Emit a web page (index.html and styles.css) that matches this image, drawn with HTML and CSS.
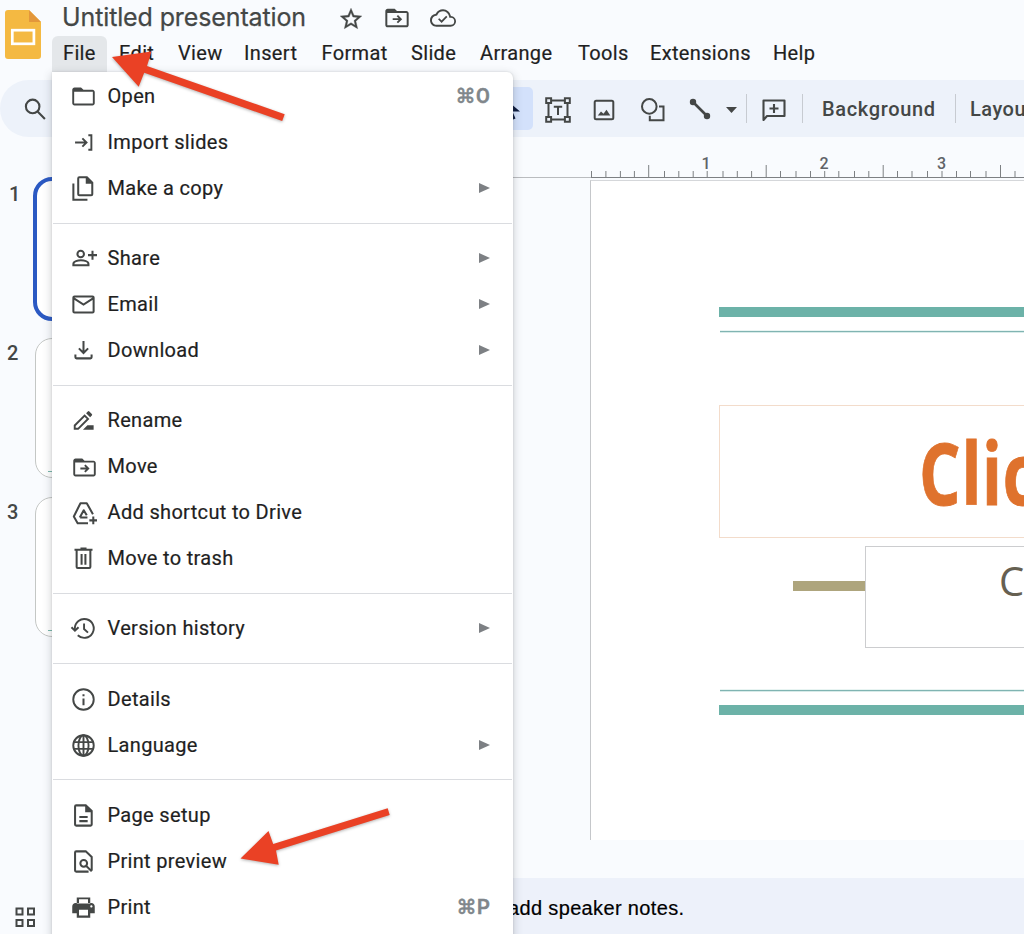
FILE: index.html
```
<!DOCTYPE html>
<html lang="en">
<head>
<meta charset="utf-8">
<title>Untitled presentation</title>
<link rel="stylesheet" href="styles.css">
</head>
<body>
<div class="app">
  <header class="header">
    <svg class="logo" viewBox="0 0 36 50"><path fill="#f4b942" d="M3 0h21l12 12v34a3 3 0 0 1-3 3H3a3 3 0 0 1-3-3V3a3 3 0 0 1 3-3z"/><path fill="#e3973b" d="M24 0l12 12H24z"/><rect x="7.3" y="20.2" width="21.6" height="13.6" fill="none" stroke="#fff" stroke-width="2.7"/></svg>
    <div class="heading">
      <div class="title-row">
        <h1 class="title">Untitled presentation</h1>
        <svg class="star" viewBox="0 0 24 24"><path fill="currentColor" stroke="currentColor" stroke-width=".3" d="M22 9.24l-7.19-.62L12 2 9.19 8.63 2 9.24l5.46 4.73L5.82 21 12 17.27 18.18 21l-1.63-7.03L22 9.24zM12 15.4l-3.76 2.27 1-4.28-3.32-2.88 4.38-.38L12 6.1l1.71 4.04 4.38.38-3.32 2.88 1 4.28L12 15.4z"/></svg>
        <svg class="move-title" viewBox="0 0 24 24"><path fill="currentColor" fill-rule="evenodd" d="M10 4H4c-1.100 0-2 .900-2 2v12c0 1.100.900 2 2 2h16c1.100 0 2-.900 2-2V8c0-1.100-.900-2-2-2h-8zM3.700 7.700h16.600v10.600H3.700z"/><path fill="none" stroke="currentColor" stroke-width="1.600" d="M8.300 13h6.500M12.300 10l3 3-3 3"/></svg>
        <svg class="cloud" viewBox="0 0 24 24"><path fill="currentColor" d="M19.35 10.04A7.49 7.49 0 0 0 12 4C9.11 4 6.6 5.64 5.35 8.04A5.994 5.994 0 0 0 0 14c0 3.31 2.69 6 6 6h13c2.76 0 5-2.24 5-5 0-2.64-2.05-4.78-4.65-4.96zM19 18.2H6c-2.3 0-4.2-1.9-4.2-4.2 0-2.1 1.6-3.95 3.73-4.17l1-.1.47-.9A5.7 5.7 0 0 1 12 5.8c2.7 0 5 1.900 5.57 4.500l.3 1.400 1.400.1A3.200 3.200 0 0 1 19 18.200z"/><path fill="none" stroke="currentColor" stroke-width="1.600" d="M8 12.700l2.700 2.700 4.800-4.900"/></svg>
      </div>
      <nav class="menubar">
        <span class="m active">File</span><span class="m edit">Edit</span><span class="m view">View</span><span class="m insert">Insert</span><span class="m format">Format</span><span class="m slide-m">Slide</span><span class="m arrange">Arrange</span><span class="m tools">Tools</span><span class="m ext">Extensions</span><span class="m help">Help</span>
      </nav>
    </div>
  </header>

  <div class="toolbar">
    <svg class="t-search" viewBox="0 0 24 24"><path fill="none" stroke="currentColor" stroke-width="1.800" d="M14.200 14.200L20.500 20.500M15.800 9.800a5.800 5.800 0 1 1-11.600 0 5.800 5.800 0 0 1 11.600 0z"/></svg>
    <div class="t-select"><svg viewBox="0 0 24 24"><path fill="#0c1a3e" d="M5 0V20l6-4 3 7 3.500-1.500-3-7H22z"/></svg></div>
    <svg class="t-text" viewBox="0 0 26 26"><g fill="none" stroke="currentColor" stroke-width="2"><path d="M6.500 3.500h13M6.500 22.500h13M3.500 6.500v13M22.500 6.500v13"/><path d="M1.200 1.200h4.900v4.900H1.200zM19.900 1.200h4.900v4.900h-4.900zM1.200 19.900h4.900v4.900H1.200zM19.900 19.900h4.900v4.900h-4.900z"/><path d="M8.800 9.700h8.400M13 9.700v8.300"/></g></svg>
    <svg class="t-image" viewBox="0 0 22 22"><rect x="1.700" y="1.700" width="18.600" height="18.600" rx="1.500" fill="none" stroke="currentColor" stroke-width="2"/><path fill="currentColor" d="M4.800 16.500l3.200-4 2.500 2.300 3-4 3.800 5.700z"/></svg>
    <svg class="t-shape" viewBox="0 0 24 24"><g fill="none" stroke="currentColor" stroke-width="2"><circle cx="8.300" cy="8.400" r="7.300"/><path d="M18 8.500h4.500v13.800H8.800v-4.500"/></g></svg>
    <svg class="t-line" viewBox="0 0 22 22"><path stroke="currentColor" stroke-width="2.600" d="M4 4l14 14"/><g fill="currentColor"><circle cx="4" cy="4" r="3.200"/><circle cx="18" cy="18" r="3.200"/></g></svg>
    <svg class="t-caret" viewBox="0 0 11 6"><path fill="currentColor" d="M0 0h11L5.500 6z"/></svg>
    <i class="sep s1"></i>
    <svg class="t-comment" viewBox="0 0 24 24"><path fill="none" stroke="currentColor" stroke-width="2.100" stroke-linejoin="round" d="M1.500 22V2.500h21V18H5z M12 6v9M7.500 10.500h9"/></svg>
    <i class="sep s2"></i>
    <span class="t-bg">Background</span>
    <i class="sep s3"></i>
    <span class="t-layout">Layou</span>
  </div>

  <main class="workspace">
    <aside class="rail">
      <div class="thumb-row first"><b>1</b><div class="thumb selected"></div></div>
      <div class="thumb-row"><b>2</b><div class="thumb"><i></i></div></div>
      <div class="thumb-row"><b>3</b><div class="thumb"><i></i></div></div>
      <svg class="grid-icon" viewBox="0 0 21 21"><path fill="none" stroke="currentColor" stroke-width="2" d="M1.500 1.500h6v6h-6zM13 1.500h6v6h-6zM1.500 13h6v6h-6zM13 13h6v6h-6z"/></svg>
    </aside>
    <section class="editor">
      <svg class="ruler" viewBox="0 0 434 43">
        <path stroke="#babcbf" stroke-width="1" d="M0 40.500H434" fill="none"/>
        <path stroke="#7d8083" stroke-width="1" fill="none" d="M1 40.500H434M1.500 34v6M15.900 34v6M30.400 34v6M44.400 34v6M58.700 28v12M74.500 34v6M88.800 34v6M103.200 34v6M117.200 34v6M133 34v6M147.300 34v6M161.600 34v6M176.200 28v12M190.500 34v6M206 34v6M220.500 34v6M234.700 34v6M248.800 34v6M264.500 34v6M278.800 34v6M293.200 28v12M307.500 34v6M322 34v6M337.500 34v6M352 34v6M366.500 34v6M380.500 34v6M396 34v6M410.500 28v12M425 34v6"/>
        <g class="ruler-num"><text x="116" y="31.500">1</text><text x="234" y="31.500">2</text><text x="351.500" y="31.500">3</text></g>
      </svg>
      <div class="slide">
        <i class="bar top"></i><i class="line upper"></i>
        <div class="title-box"><span>Clic</span></div>
        <i class="tan"></i>
        <div class="sub-box">C</div>
        <i class="line lower"></i><i class="bar bottom"></i>
      </div>
      <div class="notes">add speaker notes.</div>
    </section>
  </main>

  <div class="menu">
    <div class="row"><svg viewBox="0 0 24 24"><path fill="currentColor" fill-rule="evenodd" d="M9.800 4H4c-1.100 0-2 .900-2 2v12c0 1.100.900 2 2 2h16c1.100 0 2-.900 2-2V8c0-1.100-.900-2-2-2h-8zM3.700 7.700h16.600v10.600H3.700z"/></svg><span>Open</span><kbd>⌘O</kbd></div>
    <div class="row"><svg viewBox="0 0 24 24"><path fill="none" stroke="currentColor" stroke-width="1.700" d="M4.500 12h10M11 8.300L14.700 12 11 15.700M16.300 5.500H19v13h-2.700"/></svg><span>Import slides</span></div>
    <div class="row"><svg viewBox="0 0 24 24"><path fill="none" stroke="currentColor" stroke-width="1.800" d="M3 7.500V22h12.500M8.300 2H15l4.800 4.800V17a1 1 0 0 1-1 1H8.300a1 1 0 0 1-1-1V3a1 1 0 0 1 1-1z"/><path fill="currentColor" d="M14 1.500l6.300 6.300H14z"/></svg><span>Make a copy</span><em></em></div>
    <hr>
    <div class="row"><svg viewBox="0 0 24 24"><g fill="none" stroke="currentColor" stroke-width="1.800"><circle cx="9.500" cy="8" r="2.900"/><path d="M3 18v-1.200c0-2.300 4-3.200 6.700-3.200s6.700.900 6.700 3.200V18zM20 5v8M16 9h8"/></g></svg><span>Share</span><em></em></div>
    <div class="row"><svg viewBox="0 0 24 24"><path fill="none" stroke="currentColor" stroke-width="1.800" d="M4 4.800h16a1 1 0 0 1 1 1v12.400a1 1 0 0 1-1 1H4a1 1 0 0 1-1-1V5.800a1 1 0 0 1 1-1zM3.500 6.500L12 12l8.500-5.500"/></svg><span>Email</span><em></em></div>
    <div class="row"><svg viewBox="0 0 24 24"><path fill="none" stroke="currentColor" stroke-width="1.800" d="M12 3.500v10.500M7.900 10.100L12 14.200l4.100-4.100M4.800 15.500V18a1 1 0 0 0 1 1h12.400a1 1 0 0 0 1-1v-2.500"/></svg><span>Download</span><em></em></div>
    <hr>
    <div class="row"><svg viewBox="0 0 24 24"><path fill="none" stroke="currentColor" stroke-width="1.700" d="M4.200 19.400v-3l8.800-8.800 3 3-8.800 8.800z"/><path fill="currentColor" d="M14.300 5.500l1.500-1.500a1 1 0 0 1 1.400 0l2.200 2.200a1 1 0 0 1 0 1.400l-1.500 1.500zM11.500 20.200l4-4H21v4z"/></svg><span>Rename</span></div>
    <div class="row"><svg viewBox="0 0 24 24"><g transform="translate(.9 .8)"><path fill="currentColor" fill-rule="evenodd" d="M10 4H4c-1.100 0-2 .900-2 2v12c0 1.100.900 2 2 2h16c1.100 0 2-.900 2-2V8c0-1.100-.900-2-2-2h-8zM3.700 7.700h16.600v10.600H3.700z"/><path fill="none" stroke="currentColor" stroke-width="1.700" d="M8.300 13h6.500M12.300 10l3 3-3 3"/></g></svg><span>Move</span></div>
    <div class="row"><svg viewBox="0 0 24 24"><g fill="none" stroke="currentColor" stroke-width="1.800" stroke-linejoin="round"><path d="M16 21.500H6.800L3.400 15.500 9.300 3.800h5.600l5.500 9.700M9 16.500h6.500M8.700 16.500l3.500-6.500 2.700 4.500M20.700 15.500v7M17.200 19h7"/></g></svg><span>Add shortcut to Drive</span></div>
    <div class="row"><svg viewBox="0 0 24 24"><path fill="none" stroke="currentColor" stroke-width="1.800" d="M4 4.300h16M9.300 3.200h5.400M5.900 5v14.500a1 1 0 0 0 1 1h10.200a1 1 0 0 0 1-1V5M10.300 8v9.500M13.700 8v9.500"/></svg><span>Move to trash</span></div>
    <hr>
    <div class="row"><svg viewBox="0 0 24 24"><path fill="none" stroke="currentColor" stroke-width="1.700" d="M4.300 13.500V12a8.400 8.400 0 1 1 2.600 6M12.500 7.500v5l3.500 3.200"/><path fill="none" stroke="currentColor" stroke-width="1.800" d="M1.300 10.900l3.100 3 3.200-3"/></svg><span>Version history</span><em></em></div>
    <hr class="low">
    <div class="row"><svg viewBox="0 0 24 24"><circle cx="12" cy="12" r="9.100" fill="none" stroke="currentColor" stroke-width="1.700"/><path fill="currentColor" d="M11.100 11h1.800v6h-1.800zM11.100 7.300h1.800v1.900h-1.800z"/></svg><span>Details</span></div>
    <div class="row"><svg viewBox="0 0 24 24"><g fill="none" stroke="currentColor" stroke-width="1.700"><circle cx="12" cy="12" r="9.100"/><ellipse cx="12" cy="12" rx="4.500" ry="9.100"/><path d="M3.600 9h16.800M3.600 15h16.800M12 3v18"/></g></svg><span>Language</span><em></em></div>
    <hr class="last">
    <div class="row"><svg viewBox="0 0 24 24"><path fill="none" stroke="currentColor" stroke-width="1.800" d="M5.500 3H14l5.300 5v12a1 1 0 0 1-1 1H5.500a1 1 0 0 1-1-1V4a1 1 0 0 1 1-1zM8.300 13.300h7.400M8.300 17h7.400"/><path fill="currentColor" d="M13.500 2.500L19.500 9h-6z"/></svg><span>Page setup</span></div>
    <div class="row"><svg viewBox="0 0 24 24"><g fill="none" stroke="currentColor" stroke-width="1.800"><path d="M16.500 21H5.500a1 1 0 0 1-1-1V4a1 1 0 0 1 1-1H14l5.300 5v12M14.300 15.800l5 5"/><circle cx="12.200" cy="13.600" r="3"/></g></svg><span>Print preview</span></div>
    <div class="row"><svg viewBox="0 0 24 24"><path fill="currentColor" fill-rule="evenodd" d="M19 8H5c-1.660 0-3 1.340-3 3v6h4v4h12v-4h4v-6c0-1.660-1.340-3-3-3zm-3 11H8v-5h8v5zm3-7c-.550 0-1-.450-1-1s.450-1 1-1 1 .450 1 1-.450 1-1 1zM18 3H6v5.500h12zM16 4.700v3.300H8V4.700z"/></svg><span>Print</span><kbd>⌘P</kbd></div>
  </div>

  <svg class="pointers" viewBox="0 0 1024 934"><g fill="#ea4125"><path d="M112 57l39.500-5.500-4.500 14.500 137.700 48.200-2.500 6.800-138-48.300-5.500 14z"/><path d="M240.500 858.500l28-27.500 4.700 13 114.500-35.700 2 6.700L276 850.500l2.700 14.200z"/></g></svg>
</div>
</body>
</html>
```
FILE: styles.css
```
* { box-sizing: border-box; }
body { margin: 0; background: #f9fbfe; font-family: Roboto, "Liberation Sans", sans-serif; color: #1f1f1f; }
svg { display: block; flex: none; }
.app { position: relative; width: 1024px; height: 934px; overflow: hidden; display: flex; flex-direction: column; }

.header { height: 80px; display: flex; flex: none; padding-left: 5px; }
.logo { width: 36px; height: 50px; margin-top: 10px; }
.heading { margin-left: 11px; }
.title-row { display: flex; align-items: center; height: 36px; padding-left: 10px; color: #444746; }
.title { margin: 0; width: 250px; font: 400 25px/34px Inter, sans-serif; letter-spacing: -0.12px; white-space: nowrap; height: 36px; -webkit-text-stroke: .25px #444746; }
.star { width: 26px; height: 26px; margin: 1px 0 0 26px; }
.move-title { width: 28px; height: 28px; margin-left: 19px; }
.cloud { width: 26px; height: 26px; margin-left: 19px; }
.menubar { display: flex; height: 36px; font-size: 20px; line-height: 35px; letter-spacing: .34px; white-space: nowrap; -webkit-text-stroke: .2px #1f1f1f; }
.m { padding-left: 11px; flex: none; }
.active { width: 55px; background: #e4e7ea; border-radius: 6px 6px 0 0; }
.edit { width: 60px; padding-left: 12px; }
.view { width: 66px; }
.insert { width: 77.5px; }
.format { width: 89.5px; }
.slide-m { width: 69px; }
.arrange { width: 98px; }
.tools { width: 72px; }
.ext { width: 123px; }

.toolbar { height: 57px; flex: none; display: flex; align-items: center; background: #edf2fa; border-radius: 29px 0 0 29px; color: #444746; font-size: 20px; font-weight: 500; white-space: nowrap; }
.t-search { width: 28px; height: 28px; margin-left: 21px; }
.t-select { width: 40px; height: 43px; margin-left: 444px; border-radius: 5px; background: #d3e1fb; flex: none; padding: 10px 0 0 5px; }
.t-select svg { width: 24px; height: 24px; }
.t-text { width: 26px; height: 26px; margin: 3px 0 0 12px; }
.t-image { width: 22px; height: 22px; margin: 3px 0 0 22px; }
.t-shape { width: 24px; height: 24px; margin: 3px 0 0 26px; }
.t-line { width: 22px; height: 22px; margin-left: 24px; }
.t-caret { width: 11px; height: 6px; margin: 3px 0 0 15px; }
.sep { width: 1px; height: 29px; background: #c7cbd1; flex: none; }
.s1 { margin-left: 9px; }
.t-comment { width: 24px; height: 24px; margin: 2px 0 0 15px; }
.s2 { margin-left: 16px; }
.t-bg { width: 133px; padding-left: 19px; letter-spacing: .65px; flex: none; }
.s3 { margin-left: 19px; }
.t-layout { margin-left: 14px; letter-spacing: .5px; }

.workspace { flex: 1; display: flex; min-height: 0; }
.rail { width: 590px; flex: none; margin-right: -77px; padding-top: 40px; color: #444746; }
.thumb-row { display: flex; height: 140px; margin-bottom: 19px; }
.thumb-row.first { height: 144px; margin-bottom: 17px; }
.thumb-row b { width: 35px; padding: 5px 0 0 7px; font-size: 20px; line-height: 20px; font-weight: 500; }
.first b { width: 33px; padding-left: 9px; padding-top: 7px; }
.thumb { width: 260px; height: 100%; border: 1.500px solid #c4c7c5; border-radius: 17px; background: #fff; }
.thumb i { display: block; width: 60px; height: 1px; margin: 132px 0 0 12px; background: #79b8ac; }
.selected { border: 4px solid #2b59c3; border-radius: 19px; }
.grid-icon { width: 21px; height: 21px; margin: 270px 0 0 15px; }

.editor { width: 511px; flex: none; position: relative; display: flex; flex-direction: column; }
.editor::before { content: ""; position: absolute; top: 40px; left: 0; width: 77px; height: 1px; background: #babcbf; }
.ruler { width: 434px; height: 43px; margin-left: 77px; }
.ruler-num { font-size: 16px; font-weight: 500; fill: #5f6368; text-anchor: middle; }
.slide { position: relative; width: 434px; height: 660px; margin-left: 77px; background: #fff; border-left: 1px solid #c5c7ca; border-top: 1px solid #d5d7da; overflow: hidden; }
.slide > * { position: absolute; }
.bar { left: 128px; right: 0; height: 9px; background: #6cb2a8; }
.bar.top { top: 126px; height: 10px; }
.bar.bottom { top: 524px; height: 10px; }
.line { left: 129px; right: 0; height: 1px; background: #80b4b2; box-shadow: 0 1px #d8ebe9, 0 -1px #e8f4f2; }
.upper { top: 150px; }
.lower { top: 509px; }
.title-box { left: 128px; top: 224px; width: 330px; height: 133px; border: 1px solid #f3dccb; }
.title-box span { display: block; margin-left: 199px; font: 700 86px/131px "Open Sans", sans-serif; color: #df722d; transform: scaleX(.76); transform-origin: 0 0; letter-spacing: 1px; -webkit-text-stroke: .8px #df722d; }
.tan { left: 202px; top: 400px; width: 73px; height: 10px; background: #aea57d; }
.sub-box { left: 274px; top: 365px; width: 180px; height: 102px; border: 1px solid #cccdcf; background: #fff; padding-left: 133px; font: 400 40px/68px "Open Sans", sans-serif; color: #666051; }
.notes { height: 56px; margin-top: 38px; background: #edf1fa; font: 20px/60px "Liberation Sans", Arial, sans-serif; color: #000; letter-spacing: .35px; padding-left: 0; text-indent: -5px; white-space: nowrap; -webkit-text-stroke: .2px #000; }

.menu { position: absolute; left: 52px; top: 72px; width: 461px; height: 880px; padding-top: 1px; background: #fff; border-radius: 0 6px 6px 6px; box-shadow: 0 3px 9px 1px rgba(60, 64, 67, .22), 0 0 2px rgba(60, 64, 67, .2); }
.row { height: 46px; display: flex; align-items: center; padding: 0 23px 0 18px; font-size: 20px; letter-spacing: .33px; color: #1f1f1f; -webkit-text-stroke: .2px #1f1f1f; }
.row svg { width: 27px; height: 27px; margin-right: 10.500px; color: #444746; }
.row kbd { margin-left: auto; font: 500 20px "Roboto", "DejaVu Sans", sans-serif; color: #80868b; -webkit-text-stroke: .6px #80868b; }
.row em { margin-left: auto; border-left: 11px solid #7d8084; border-top: 5.500px solid transparent; border-bottom: 5.500px solid transparent; }
.menu hr { margin: 12px 1px 11px; height: 1px; border: 0; background: #dadce0; }
.menu hr.low { margin-bottom: 12px; }
.menu hr.last { margin: 11px 1px 12px; }
.pointers { position: absolute; left: 0; top: 0; width: 1024px; height: 934px; pointer-events: none; filter: drop-shadow(0 1.500px 1.500px rgba(0, 0, 0, .3)); }
```
